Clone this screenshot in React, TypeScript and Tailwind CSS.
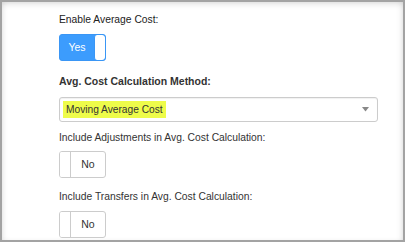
import React from 'react';

const Toggle: React.FC<{ on: boolean }> = ({ on }) => {
  if (on) {
    return (
      <div className="flex h-[27px] w-[47px] rounded-[3px] border border-[#3a96f5] bg-[#3c9cfd] overflow-hidden">
        <div className="flex flex-1 items-center justify-center text-[10.5px] text-white">Yes</div>
        <div className="w-[11px] rounded-[3px] border-l border-[#3a96f5] bg-white" />
      </div>
    );
  }
  return (
    <div className="flex h-[27px] w-[47px] rounded-[3px] border border-[#cccccc] bg-white overflow-hidden">
      <div className="w-[11px] border-r border-[#cccccc] bg-white" />
      <div className="flex flex-1 items-center justify-center text-[10.5px] text-[#333]">No</div>
    </div>
  );
};

const App: React.FC = () => {
  return (
    <div
      className="h-[242px] w-[405px] border-2 border-[#a3a3a3] bg-white shadow-[inset_0_4px_6px_-2px_rgba(0,0,0,0.12),inset_4px_0_6px_-3px_rgba(0,0,0,0.08),inset_-4px_0_6px_-3px_rgba(0,0,0,0.1)] text-[#333]"
      style={{ fontFamily: '"Liberation Sans", Arial, sans-serif' }}
    >
      <div className="flex flex-col pl-[57px] pr-[25px] pt-[11px]">
        <div className="text-[10.3px] leading-[14px] text-[#222]">Enable Average Cost:</div>
        <div className="mt-[7px]">
          <Toggle on />
        </div>
        <div className="mt-[13px] text-[10.5px] font-bold leading-[14px]">Avg. Cost Calculation Method:</div>
        <div className="mt-[9px] flex h-[25px] items-center justify-between rounded-[3px] border border-[#cccccc] bg-white pl-[3px] pr-[8px] shadow-[inset_0_1px_1px_rgba(0,0,0,0.06)]">
          <span className="bg-[#eefc4a] px-[3px] text-[10.2px] leading-[17px]">Moving Average Cost</span>
          <svg width="7" height="5" viewBox="0 0 7 5">
            <path d="M0 0 L7 0 L3.5 4.5 Z" fill="#888" />
          </svg>
        </div>
        <div className="mt-[9px] text-[10.3px] leading-[14px]">Include Adjustments in Avg. Cost Calculation:</div>
        <div className="mt-[6px]">
          <Toggle on={false} />
        </div>
        <div className="mt-[12px] text-[10.3px] leading-[14px]">Include Transfers in Avg. Cost Calculation:</div>
        <div className="mt-[7px]">
          <Toggle on={false} />
        </div>
      </div>
    </div>
  );
};

export default App;
